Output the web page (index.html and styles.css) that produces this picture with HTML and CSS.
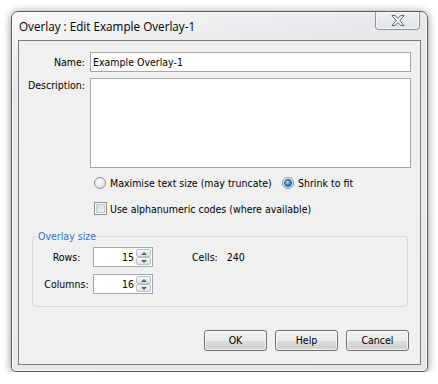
FILE: index.html
```html
<!DOCTYPE html>
<html>
<head>
<meta charset="utf-8">
<link rel="stylesheet" href="styles.css">
</head>
<body>
<div class="window">
  <div class="titlebar">
    <span class="title">Overlay : Edit Example Overlay-1</span>
    <div class="close">
      <svg width="14" height="11" viewBox="0 0 14 11"><polygon points="1,0.5 4.2,0.5 7,3.4 9.8,0.5 13,0.5 8.9,5.5 13,10.5 9.8,10.5 7,7.6 4.2,10.5 1,10.5 5.1,5.5" fill="#f4f6f8" stroke="#566170" stroke-width="1" stroke-linejoin="round"/></svg>
    </div>
  </div>
  <div class="client">
    <div class="form">
      <span class="lbl">Name:</span>
      <div class="textbox name">Example Overlay-1</div>
      <span class="lbl top">Description:</span>
      <div class="textbox desc"></div>
      <span></span>
      <div class="options">
        <label class="opt first"><span class="radio"></span>Maximise text size (may truncate)</label>
        <label class="opt"><span class="radio on"></span>Shrink to fit</label>
      </div>
      <span></span>
      <label class="opt check-row"><span class="check"></span>Use alphanumeric codes (where available)</label>
    </div>
    <fieldset class="group">
      <legend>Overlay size</legend>
      <div class="group-grid">
        <span class="glbl">Rows:</span>
        <div class="spin"><span class="val">15</span><span class="arrows"><span class="sb up"></span><span class="sb down"></span></span></div>
        <span class="cells">Cells:<span class="count">240</span></span>
        <span class="glbl">Columns:</span>
        <div class="spin"><span class="val">16</span><span class="arrows"><span class="sb up"></span><span class="sb down"></span></span></div>
        <span></span>
      </div>
    </fieldset>
    <div class="buttons">
      <div class="btn">OK</div>
      <div class="btn">Help</div>
      <div class="btn">Cancel</div>
    </div>
  </div>
</div>
</body>
</html>
```

FILE: styles.css
```css
html, body {
  margin: 0;
  padding: 0;
  background: #ffffff;
}
body {
  padding: 11px 0 0 11px;
  font-family: "DejaVu Sans Condensed", "Liberation Sans", sans-serif;
  font-size: 10.5px;
  color: #000;
}
.window {
  box-sizing: border-box;
  width: 417px;
  height: 361px;
  border: 1px solid #5c5c5c;
  border-radius: 7px 7px 5px 5px;
  background: linear-gradient(170deg, #f7f8f9 0%, #e6e8eb 18%, #e9ebee 60%, #e4e6e9 100%);
  box-shadow: 0 1px 8px rgba(0,0,0,0.45), inset 0 0 0 1px rgba(255,255,255,0.7);
  display: flex;
  flex-direction: column;
}
.titlebar {
  height: 28px;
  display: flex;
  justify-content: space-between;
  align-items: flex-start;
  padding-left: 7px;
}
.title {
  font-family: "Open Sans", "Liberation Sans", sans-serif;
  font-size: 11.7px;
  line-height: 16px;
  margin-top: 6px;
  color: #000;
}
.close {
  width: 45px;
  height: 18px;
  box-sizing: border-box;
  margin-right: 7px;
  border: 1px solid #8e949b;
  border-top: none;
  border-radius: 0 0 4px 4px;
  background: linear-gradient(#eef0f2, #e2e5e9);
  box-shadow: inset 0 0 0 1px rgba(255,255,255,0.6);
  display: flex;
  align-items: center;
  justify-content: center;
}
.client {
  flex: 1;
  margin: 0 6px 6px;
  border: 1px solid #7c7c7c;
  background: #f0f0f0;
  padding: 11px 9px 0 9px;
}
.form {
  display: grid;
  grid-template-columns: 57px 1fr;
  column-gap: 5px;
  row-gap: 6px;
}
.lbl {
  text-align: right;
  align-self: center;
  line-height: 14px;
}
.lbl.top {
  align-self: start;
}
.textbox {
  box-sizing: border-box;
  border: 1px solid #a3a7ad;
  background: #fff;
}
.textbox.name {
  height: 20px;
  line-height: 18px;
  padding-left: 2px;
}
.textbox.desc {
  height: 90px;
}
.options {
  display: flex;
  padding-left: 4px;
  height: 17px;
  align-items: center;
}
.opt {
  display: flex;
  align-items: center;
  line-height: 14px;
}
.opt.first {
  width: 188px;
}
.check-row {
  padding-left: 4px;
  height: 17px;
  margin-top: 3px;
}
.radio {
  width: 12px;
  height: 12px;
  box-sizing: border-box;
  border-radius: 50%;
  border: 1px solid #8d9092;
  background: radial-gradient(circle at 40% 35%, #ffffff 0%, #f0f0f0 40%, #d4d6d8 100%);
  margin-right: 4px;
  display: flex;
  align-items: center;
  justify-content: center;
}
.radio.on::after {
  content: "";
  width: 6px;
  height: 6px;
  border-radius: 50%;
  border: 1px solid #1d5282;
  background: radial-gradient(circle at 40% 35%, #a6dcfb 0%, #3b8fd0 50%, #17538e 100%);
}
.check {
  width: 13px;
  height: 13px;
  box-sizing: border-box;
  border: 1px solid #8e8f8f;
  background: linear-gradient(135deg, #c9cdd2 0%, #e8e9ea 60%, #f7f7f7 100%);
  box-shadow: inset 0 0 0 1px #fbfbfb, inset 0 0 0 2px #c3c6ca;
  margin-right: 3px;
}
.group {
  margin: 12px 3px 0 4px;
  padding: 4px 7px 12px 7px;
  border: 1px solid #d3d9de;
  border-radius: 3px;
  min-width: 0;
}
.group legend {
  color: #3a6ad2;
  line-height: 14px;
  padding: 0 1px;
  margin-left: -3px;
}
.group-grid {
  display: grid;
  grid-template-columns: 53px 60px auto;
  row-gap: 7px;
  align-items: center;
}
.glbl {
  text-align: center;
  line-height: 14px;
}
.spin {
  box-sizing: border-box;
  width: 60px;
  height: 20px;
  border: 1px solid #a3a7ad;
  background: #fff;
  display: flex;
}
.val {
  flex: 1;
  text-align: right;
  line-height: 18px;
  padding-right: 2px;
}
.arrows {
  width: 16px;
  box-sizing: border-box;
  padding: 1px 1px 1px 0;
  display: flex;
  flex-direction: column;
}
.sb {
  flex: 1;
  box-sizing: border-box;
  border: 1px solid #b8c0ca;
  border-radius: 2px;
  background: linear-gradient(#f6f7f9, #dde2e8);
  display: flex;
  align-items: center;
  justify-content: center;
}
.sb.up::after {
  content: "";
  border-left: 3px solid transparent;
  border-right: 3px solid transparent;
  border-bottom: 3px solid #4e6280;
}
.sb.down::after {
  content: "";
  border-left: 3px solid transparent;
  border-right: 3px solid transparent;
  border-top: 3px solid #4e6280;
}
.cells {
  margin-left: 39px;
  line-height: 14px;
}
.count {
  margin-left: 9px;
}
.buttons {
  display: flex;
  justify-content: flex-end;
  gap: 8px;
  margin-top: 23px;
  padding-right: 2px;
}
.btn {
  box-sizing: border-box;
  width: 63px;
  height: 21px;
  border: 1px solid #707070;
  border-radius: 3px;
  background: linear-gradient(#f2f2f2 0%, #ebebeb 50%, #dddddd 50%, #cfcfcf 100%);
  box-shadow: inset 0 0 0 1px rgba(255,255,255,0.75);
  text-align: center;
  line-height: 19px;
}
```
